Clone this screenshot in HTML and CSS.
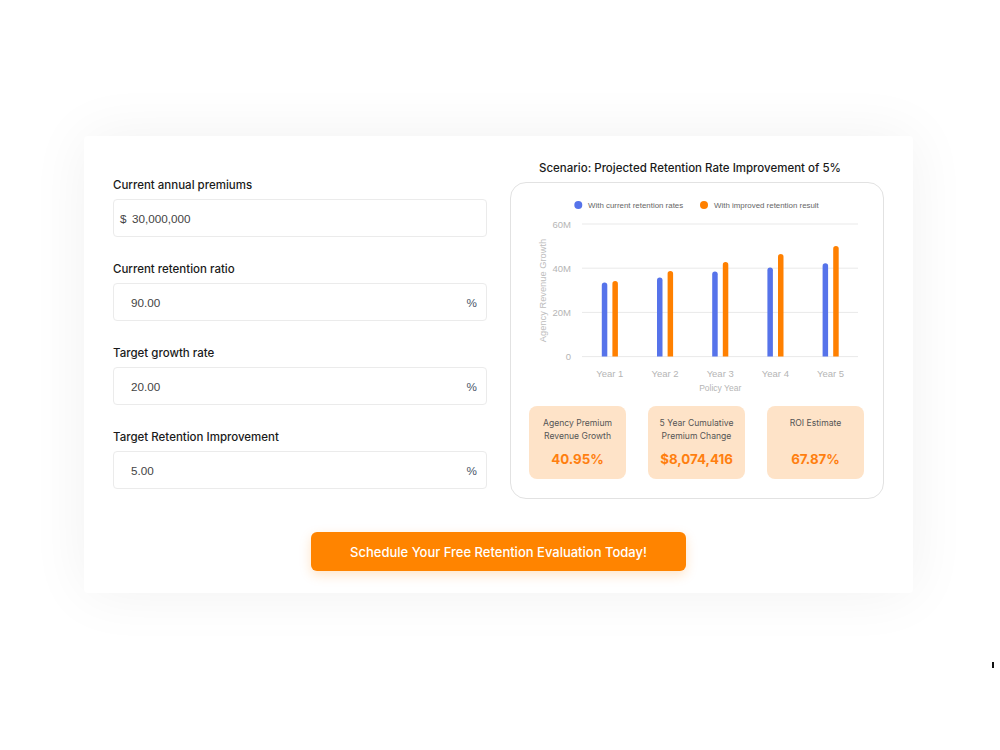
FILE: index.html
```html
<!DOCTYPE html>
<html>
<head>
<meta charset="utf-8">
<link rel="stylesheet" href="styles.css">
</head>
<body>
<div class="page">
  <div class="card">
    <div class="columns">
      <div class="form">
        <div class="field">
          <label class="label">Current annual premiums</label>
          <div class="input"><span class="prefix">$</span><span class="val val-prefixed">30,000,000</span></div>
        </div>
        <div class="field">
          <label class="label">Current retention ratio</label>
          <div class="input"><span class="val">90.00</span><span class="suffix">%</span></div>
        </div>
        <div class="field">
          <label class="label">Target growth rate</label>
          <div class="input"><span class="val">20.00</span><span class="suffix">%</span></div>
        </div>
        <div class="field">
          <label class="label">Target Retention Improvement</label>
          <div class="input"><span class="val">5.00</span><span class="suffix">%</span></div>
        </div>
      </div>
      <div class="results">
        <h2 class="title">Scenario: Projected Retention Rate Improvement of 5%</h2>
        <div class="chart-box">
          <svg class="chart" width="372" height="210" viewBox="0 0 372 210">
            <g class="legend">
              <circle cx="67.3" cy="22" r="4" fill="#5673ea"/>
              <text x="77" y="24.8">With current retention rates</text>
              <circle cx="193" cy="22" r="4" fill="#ff8000"/>
              <text x="203" y="24.8">With improved retention result</text>
            </g>
            <g class="grid" stroke="#e9e9e9" stroke-width="1">
              <line x1="71" x2="347" y1="41" y2="41"/>
              <line x1="71" x2="347" y1="85.2" y2="85.2"/>
              <line x1="71" x2="347" y1="129.4" y2="129.4"/>
              <line x1="71" x2="347" y1="173.6" y2="173.6"/>
            </g>
            <g class="ylabels">
              <text x="60" y="44.5">60M</text>
              <text x="60" y="88.7">40M</text>
              <text x="60" y="132.9">20M</text>
              <text x="60" y="177.1">0</text>
            </g>
            <text class="ytitle" transform="translate(35 107.5) rotate(-90)">Agency Revenue Growth</text>
            <g class="bars-blue" fill="#5673ea">
              <path d="M90.8 173.6 V102.3 a2.75 2.75 0 0 1 5.5 0 V173.6 Z"/>
              <path d="M146 173.6 V97.3 a2.75 2.75 0 0 1 5.5 0 V173.6 Z"/>
              <path d="M201.2 173.6 V91.3 a2.75 2.75 0 0 1 5.5 0 V173.6 Z"/>
              <path d="M256.4 173.6 V87.3 a2.75 2.75 0 0 1 5.5 0 V173.6 Z"/>
              <path d="M311.6 173.6 V83 a2.75 2.75 0 0 1 5.5 0 V173.6 Z"/>
            </g>
            <g class="bars-orange" fill="#ff8000">
              <path d="M101.4 173.6 V100.8 a2.75 2.75 0 0 1 5.5 0 V173.6 Z"/>
              <path d="M156.6 173.6 V90.8 a2.75 2.75 0 0 1 5.5 0 V173.6 Z"/>
              <path d="M211.8 173.6 V81.8 a2.75 2.75 0 0 1 5.5 0 V173.6 Z"/>
              <path d="M267 173.6 V73.8 a2.75 2.75 0 0 1 5.5 0 V173.6 Z"/>
              <path d="M322.2 173.6 V65.8 a2.75 2.75 0 0 1 5.5 0 V173.6 Z"/>
            </g>
            <g class="xlabels">
              <text x="98.8" y="193.5">Year 1</text>
              <text x="154" y="193.5">Year 2</text>
              <text x="209.2" y="193.5">Year 3</text>
              <text x="264.4" y="193.5">Year 4</text>
              <text x="319.6" y="193.5">Year 5</text>
            </g>
            <text class="xtitle" x="209.2" y="207.5">Policy Year</text>
          </svg>
          <div class="stats">
            <div class="stat">
              <div class="stat-label">Agency Premium<br>Revenue Growth</div>
              <div class="stat-value">40.95%</div>
            </div>
            <div class="stat">
              <div class="stat-label">5 Year Cumulative<br>Premium Change</div>
              <div class="stat-value">$8,074,416</div>
            </div>
            <div class="stat">
              <div class="stat-label">ROI Estimate</div>
              <div class="stat-value">67.87%</div>
            </div>
          </div>
        </div>
      </div>
    </div>
    <div class="actions">
      <button class="cta">Schedule Your Free Retention Evaluation Today!</button>
    </div>
  </div>
</div>
<div class="cursor-mark"></div>
</body>
</html>
```

FILE: styles.css
```css
* { box-sizing: border-box; }
html, body { margin: 0; padding: 0; background: #ffffff; }
body {
  font-family: Inter, "Noto Sans", "Liberation Sans", sans-serif;
  color: #1f2328;
  width: 1000px;
  height: 750px;
  overflow: hidden;
  position: relative;
}
.page {
  padding: 136px 87px 0 84px;
}
.card {
  background: #fff;
  border-radius: 4px;
  box-shadow: 0 0 60px rgba(0, 0, 0, 0.06);
  padding: 24px 29px 22px 29px;
}
.columns {
  display: flex;
  gap: 23px;
}
.form {
  width: 374px;
  padding-top: 17px;
  display: flex;
  flex-direction: column;
  gap: 24px;
}
.field {
  display: flex;
  flex-direction: column;
}
.label {
  font-size: 11.5px;
  line-height: 16px;
  font-weight: 500;
  color: #1a1a1a;
  margin-bottom: 6px;
}
.input {
  height: 38px;
  border: 1px solid #ebebeb;
  border-radius: 4px;
  display: flex;
  align-items: center;
  padding: 0 9px 0 17px;
  font-family: "Liberation Sans", Arial, sans-serif;
  font-size: 11.7px;
  color: #444;
}
.prefix {
  margin-left: -11px;
  width: 12px;
  color: #444;
}
.val { flex: 1; }
.suffix {
  color: #4a5568;
  font-size: 11.7px;
}
.results {
  width: 374px;
  display: flex;
  flex-direction: column;
}
.title {
  margin: 0 0 6px 0;
  padding-right: 14px;
  font-size: 11.5px;
  line-height: 16px;
  font-weight: 500;
  text-align: center;
  color: #1a1a1a;
}
.chart-box {
  border: 1px solid #e2e2e2;
  border-radius: 16px;
  height: 317px;
  display: flex;
  flex-direction: column;
}
.chart { display: block; }
.chart text {
  font-family: "Liberation Sans", Arial, sans-serif;
}
.legend text { font-size: 7.9px; fill: #666; }
.ylabels text { font-size: 9.5px; fill: #b5b5b5; text-anchor: end; }
.xlabels text { font-size: 9.5px; fill: #b5b5b5; text-anchor: middle; }
.xtitle { font-size: 8.5px; fill: #b5b5b5; text-anchor: middle; }
.ytitle { font-size: 9.3px; fill: #bdbdbd; text-anchor: middle; }
.stats {
  display: flex;
  justify-content: space-between;
  padding: 0 19px 0 18px;
  margin-top: 13px;
}
.stat {
  width: 97px;
  height: 73px;
  background: #fee3c8;
  border-radius: 8px;
  display: flex;
  flex-direction: column;
  align-items: center;
  padding: 11px 4px 12px;
  text-align: center;
}
.stat-label {
  font-size: 8.6px;
  line-height: 13px;
  color: #555;
}
.stat-value {
  margin-top: auto;
  font-size: 13.3px;
  line-height: 16px;
  font-weight: 700;
  color: #ff7f10;
}
.actions {
  display: flex;
  justify-content: center;
  margin-top: 33px;
}
.cta {
  width: 375px;
  height: 39px;
  border: none;
  border-radius: 6px;
  background: #ff8400;
  color: #fff;
  font-family: Inter, "Noto Sans", sans-serif;
  font-size: 13px;
  font-weight: 500;
  box-shadow: 0 4px 12px rgba(255, 132, 0, 0.22);
  cursor: pointer;
}
.cursor-mark {
  position: absolute;
  left: 992px;
  top: 662px;
  width: 2px;
  height: 6px;
  background: #111;
}
```
